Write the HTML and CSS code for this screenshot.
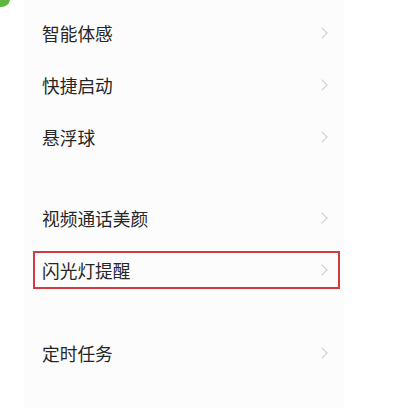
FILE: index.html
```html
<!DOCTYPE html>
<html lang="zh">
<head>
<meta charset="utf-8">
<link rel="stylesheet" href="styles.css">
</head>
<body>
<div class="corner"></div>
<div class="panel">
  <div class="group">
    <div class="row"><span class="label">智能体感</span><span class="chev"></span></div>
    <div class="row"><span class="label">快捷启动</span><span class="chev"></span></div>
    <div class="row"><span class="label">悬浮球</span><span class="chev"></span></div>
  </div>
  <div class="group">
    <div class="row"><span class="label">视频通话美颜</span><span class="chev"></span></div>
    <div class="row highlight"><span class="label">闪光灯提醒</span><span class="chev"></span></div>
  </div>
  <div class="group">
    <div class="row"><span class="label">定时任务</span><span class="chev"></span></div>
  </div>
</div>
</body>
</html>
```
FILE: styles.css
```css
html, body {
  margin: 0;
  padding: 0;
  background: #ffffff;
  width: 400px;
  height: 408px;
  overflow: hidden;
  font-family: "Noto Sans CJK SC", "Noto Sans", sans-serif;
}
.corner {
  position: absolute;
  left: -8px;
  top: -9px;
  width: 18px;
  height: 16px;
  border-radius: 50%;
  background: #5db83f;
}
.panel {
  margin-left: 24px;
  width: 320px;
  height: 408px;
  background: #fcfcfc;
  padding-top: 7px;
  box-sizing: border-box;
  display: flex;
  flex-direction: column;
}
.group + .group {
  margin-top: 29px;
}
.group:last-child {
  margin-top: 31px;
}
.row {
  position: relative;
  height: 52px;
  display: flex;
  align-items: center;
  justify-content: space-between;
  padding: 0 16px 0 18px;
}
.label {
  font-size: 17.7px;
  color: #262626;
}
.chev {
  width: 7px;
  height: 7px;
  border-top: 1.2px solid #cdcdcd;
  border-right: 1.2px solid #cdcdcd;
  transform: rotate(45deg);
  margin-right: 2px;
}
.highlight::after {
  content: "";
  position: absolute;
  left: 9px;
  right: 4px;
  top: 7px;
  bottom: 7px;
  border: 2px solid #d23b3f;
}
```
